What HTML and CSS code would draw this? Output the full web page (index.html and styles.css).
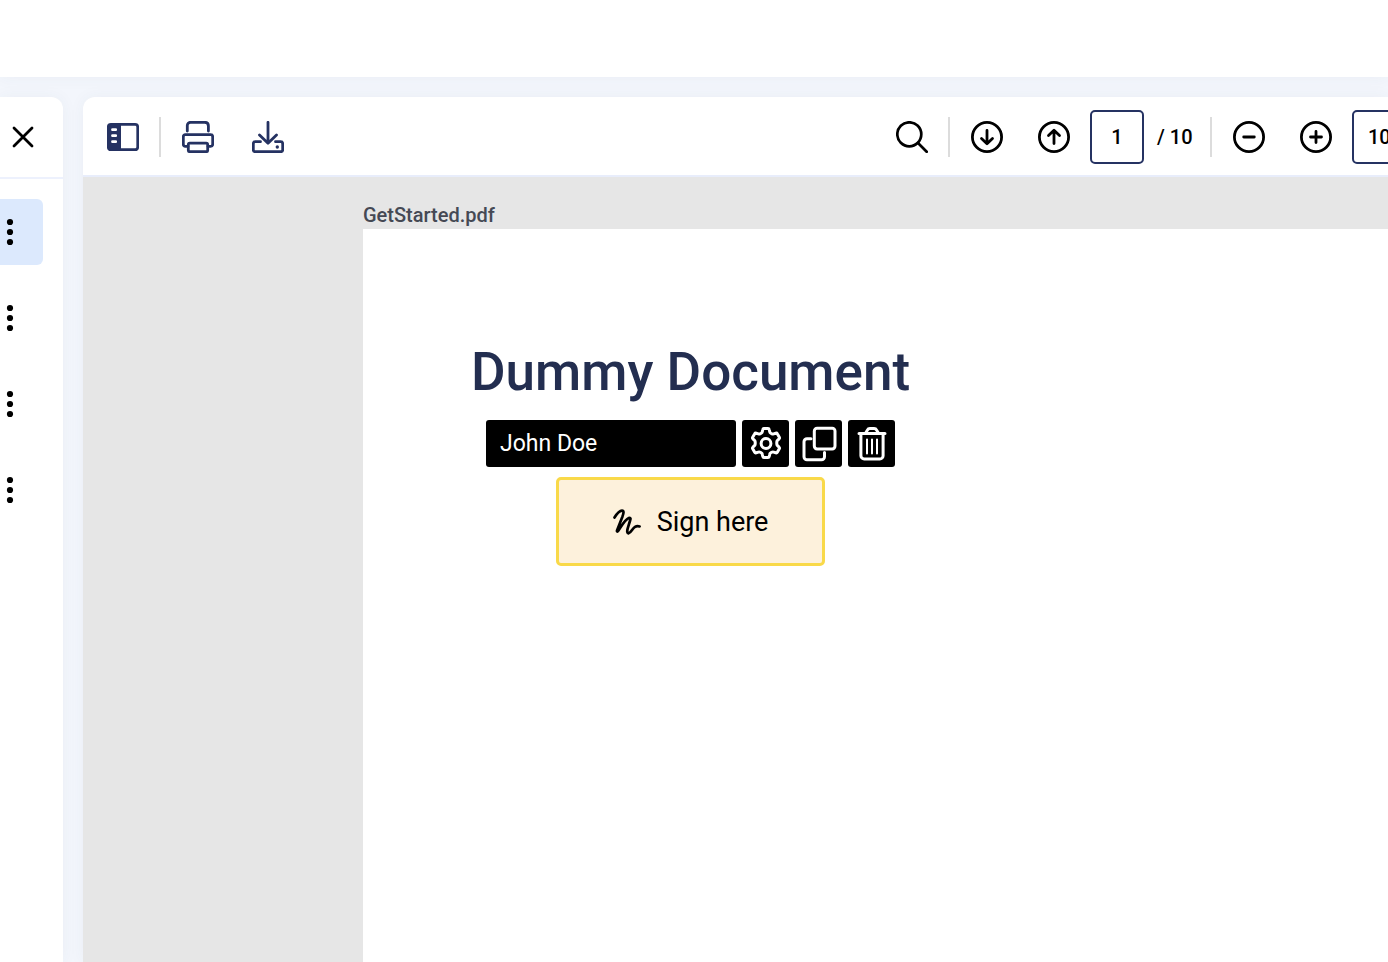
FILE: index.html
```html
<!DOCTYPE html>
<html lang="en">
<head>
    <meta charset="UTF-8">
    <meta name="viewport" content="width=device-width, initial-scale=1.0">
    <title>GetStarted.pdf</title>
    <link rel="stylesheet" href="styles.css">
</head>
<body>
    <header class="top-bar"></header>
    <div class="workspace">
        <aside class="side-panel">
            <div class="side-header">
                <button class="icon-btn" aria-label="Close">
                    <svg width="32" height="32" viewBox="0 0 32 32" stroke-width="2.8"><path d="M7 7l18 18M25 7L7 25"/></svg>
                </button>
            </div>
            <ul class="side-list">
                <li class="side-item active">
                    <button class="dots" aria-label="More"><svg width="8" height="28" viewBox="0 0 8 28"><circle cx="4" cy="4" r="3.1"/><circle cx="4" cy="14" r="3.1"/><circle cx="4" cy="24" r="3.1"/></svg></button>
                </li>
                <li class="side-item">
                    <button class="dots" aria-label="More"><svg width="8" height="28" viewBox="0 0 8 28"><circle cx="4" cy="4" r="3.1"/><circle cx="4" cy="14" r="3.1"/><circle cx="4" cy="24" r="3.1"/></svg></button>
                </li>
                <li class="side-item">
                    <button class="dots" aria-label="More"><svg width="8" height="28" viewBox="0 0 8 28"><circle cx="4" cy="4" r="3.1"/><circle cx="4" cy="14" r="3.1"/><circle cx="4" cy="24" r="3.1"/></svg></button>
                </li>
                <li class="side-item">
                    <button class="dots" aria-label="More"><svg width="8" height="28" viewBox="0 0 8 28"><circle cx="4" cy="4" r="3.1"/><circle cx="4" cy="14" r="3.1"/><circle cx="4" cy="24" r="3.1"/></svg></button>
                </li>
            </ul>
        </aside>

        <main class="viewer">
            <div class="toolbar">
                <div class="tools">
                    <button class="icon-btn navy" aria-label="Toggle thumbnails">
                        <svg width="32" height="32" viewBox="0 0 32 32" stroke-width="2.7">
                            <rect x="1.3" y="3.3" width="29.4" height="25.4" rx="2.6"/>
                            <path d="M1.5 5.5a2 2 0 0 1 2-2H14v25H3.5a2 2 0 0 1-2-2z" fill="currentColor" stroke="none"/>
                            <path d="M5.5 8.700h3.200M5.500 14.700h3.200M5.500 20.700h3.200" stroke="#fff" stroke-width="2.800"/>
                        </svg>
                    </button>
                    <span class="separator"></span>
                    <button class="icon-btn navy" aria-label="Print">
                        <svg width="32" height="32" viewBox="0 0 32 32" stroke-width="2.8" stroke-linecap="butt">
                            <path d="M5.3 10V4.500a3.200 3.200 0 0 1 3.200-3.200h14.200q3.700 0 3.700 3.700v5"/>
                            <path d="M6 25.300H3.300a2 2 0 0 1-2-2v-7.600a2 2 0 0 1 2-2h25.400a2 2 0 0 1 2 2v7.600a2 2 0 0 1-2 2H26"/>
                            <rect x="6.300" y="22.200" width="19.400" height="8.500" rx="1.500"/>
                        </svg>
                    </button>
                    <button class="icon-btn navy download" aria-label="Download">
                        <svg width="32" height="32" viewBox="0 0 32 32" stroke-width="2.8">
                            <path d="M16 1.300V22M7.500 14l8.500 8.300 8.500-8.300"/>
                            <path d="M8.500 20.700H3.300a2 2 0 0 0-2 2v6a2 2 0 0 0 2 2h25.400a2 2 0 0 0 2-2v-6a2 2 0 0 0-2-2h-5.200"/>
                            <circle cx="25.300" cy="26" r="1.700" fill="currentColor" stroke="none"/>
                        </svg>
                    </button>
                </div>
                <div class="tools tools-right">
                    <button class="icon-btn" aria-label="Search">
                        <svg width="32" height="32" viewBox="0 0 32 32" stroke-width="2.7"><circle cx="13.300" cy="13.300" r="12"/><path d="M22 22l8.700 8.700"/></svg>
                    </button>
                    <span class="separator"></span>
                    <button class="icon-btn" aria-label="Next page">
                        <svg width="32" height="32" viewBox="0 0 32 32" stroke-width="2.8"><circle cx="16" cy="16" r="14.600"/><path d="M16 9.500v13M10.500 17.500l5.500 5.300 5.500-5.300"/></svg>
                    </button>
                    <button class="icon-btn spaced" aria-label="Previous page">
                        <svg width="32" height="32" viewBox="0 0 32 32" stroke-width="2.8"><circle cx="16" cy="16" r="14.600"/><path d="M16 22.500v-13M10.500 14.500l5.500-5.300 5.500 5.300"/></svg>
                    </button>
                    <input class="page-input" type="text" value="1" aria-label="Page">
                    <span class="page-total">/ 10</span>
                    <span class="separator"></span>
                    <button class="icon-btn" aria-label="Zoom out">
                        <svg width="32" height="32" viewBox="0 0 32 32" stroke-width="2.8"><circle cx="16" cy="16" r="14.600"/><path d="M10.700 16h10.600"/></svg>
                    </button>
                    <button class="icon-btn spaced" aria-label="Zoom in">
                        <svg width="32" height="32" viewBox="0 0 32 32" stroke-width="2.8"><circle cx="16" cy="16" r="14.600"/><path d="M10.500 16h11M16 10.500v11"/></svg>
                    </button>
                    <input class="zoom-input" type="text" value="100%" aria-label="Zoom">
                </div>
            </div>

            <div class="canvas">
                <div class="file-name">GetStarted.pdf</div>
                <article class="page">
                    <div class="page-content">
                        <h1>Dummy Document</h1>
                        <div class="field-bar">
                            <input class="signer" type="text" value="John Doe" aria-label="Signer">
                            <button class="field-btn" aria-label="Settings">
                                <svg width="36" height="36" viewBox="0 0 36 36" stroke-width="3">
                                    <path d="M16 2.500h4q1 0 1.200 1l.5 2.200q.2 1 1.100 1.500l.9.500q.9.500 1.900.200l2.200-.700q1-.3 1.500.600l2 3.400q.5.900-.200 1.600l-1.600 1.500q-.7.700-.7 1.700v2q0 1 .7 1.700l1.600 1.500q.7.700.2 1.600l-2 3.400q-.5.900-1.500.6l-2.200-.7q-1-.3-1.900.2l-.9.500q-.9.500-1.100 1.500l-.5 2.200q-.2 1-1.200 1h-4q-1 0-1.200-1l-.5-2.200q-.2-1-1.100-1.500l-.9-.5q-.9-.5-1.900-.2l-2.200.7q-1 .3-1.500-.6l-2-3.400q-.5-.9.200-1.600l1.600-1.500q.7-.7.700-1.700v-2q0-1-.7-1.700l-1.600-1.500q-.7-.7-.2-1.600l2-3.400q.5-.9 1.500-.6l2.200.7q1 .3 1.900-.2l.9-.5q.9-.5 1.100-1.500l.5-2.200q.2-1 1.200-1z"/>
                                    <circle cx="18" cy="17.500" r="4.900"/>
                                </svg>
                            </button>
                            <button class="field-btn" aria-label="Duplicate">
                                <svg width="36" height="36" viewBox="0 0 36 36" stroke-width="3" stroke-linecap="butt">
                                    <rect x="13.300" y="2.200" width="20.700" height="20.700" rx="2.800"/>
                                    <path d="M10 12.800H6a3 3 0 0 0-3 3v14.900a3 3 0 0 0 3 3h14.500a3 3 0 0 0 3-3V26.500"/>
                                </svg>
                            </button>
                            <button class="field-btn" aria-label="Delete">
                                <svg width="36" height="36" viewBox="0 0 36 36" stroke-width="3">
                                    <path d="M5 7.500h26M11.500 7.200l1.800-3a3 3 0 0 1 2.600-1.600h4.200a3 3 0 0 1 2.600 1.600l1.800 3M6.900 7.700v22a3.300 3.300 0 0 0 3.300 3.300h15.600a3.300 3.300 0 0 0 3.300-3.300v-22"/>
                                    <path d="M13 13.500v14M18 13.500v14M23 13.500v14" stroke-width="2"/>
                                </svg>
                            </button>
                        </div>
                        <button class="sign-field">
                            <svg width="28" height="28" viewBox="0 0 28 28" stroke-width="2.7">
                                <path d="M1.500 9.500C4 5.500 6.500 2.700 9 2.600c2.300 0 1.500 3 .5 5.800L4 22.500c-.2 1.500.6 1.200 1.300.2C8.500 18 12 11.500 15.800 10c2-.6 1.900.8 1.300 2.500l-2.400 7.800c-.8 3-.6 5.200 1 5 2.300-.6 3.600-4.800 6.300-6.500 1.700-1 3.200-.9 4.600-.4"/>
                            </svg>
                            <span>Sign here</span>
                        </button>
                    </div>
                </article>
            </div>
        </main>
    </div>
</body>
</html>
```
FILE: styles.css
```css
* {
    box-sizing: border-box;
}

body {
    font-family: Roboto, "Liberation Sans", sans-serif;
    margin: 0;
    height: 100vh;
    display: flex;
    flex-direction: column;
    overflow: hidden;
    background-color: #f3f6fc;
    color: #000;
}

button,
input {
    font-family: inherit;
    color: inherit;
    margin: 0;
    padding: 0;
}

button {
    border: none;
    background: none;
    cursor: pointer;
}

svg {
    display: block;
    fill: none;
    stroke: currentColor;
    stroke-linecap: round;
    stroke-linejoin: round;
}

.top-bar {
    height: 77px;
    flex-shrink: 0;
    background-color: white;
    box-shadow: 0 0 16px rgba(50, 70, 100, 0.05);
}

.workspace {
    flex: 1;
    display: flex;
    gap: 20px;
    padding-top: 20px;
    min-height: 0;
}

.side-panel {
    width: 63px;
    flex-shrink: 0;
    background-color: white;
    border-radius: 0 12px 0 0;
    box-shadow: 0 0 16px rgba(50, 70, 100, 0.05);
}

.side-header {
    height: 82px;
    padding: 24px 24px 0 0;
    display: flex;
    justify-content: flex-end;
    align-items: flex-start;
    border-bottom: 2px solid #edf1fd;
}

.side-list {
    list-style: none;
    margin: 0;
    padding: 20px 20px 0 0;
    display: flex;
    flex-direction: column;
    gap: 20px;
}

.side-item {
    height: 66px;
    padding-left: 6px;
    display: flex;
    align-items: center;
    border-radius: 0 6px 6px 0;
}

.side-item.active {
    background-color: #dce9fd;
}

.dots svg {
    fill: currentColor;
    stroke: none;
}

.viewer {
    flex: 1;
    min-width: 0;
    display: flex;
    flex-direction: column;
    overflow: hidden;
    background-color: white;
    border-radius: 12px 0 0 0;
    box-shadow: 0 0 16px rgba(50, 70, 100, 0.05);
}

.toolbar {
    height: 80px;
    flex-shrink: 0;
    display: flex;
    justify-content: space-between;
    padding-left: 24px;
    border-bottom: 2px solid #e8edfb;
}

.tools {
    height: 80px;
    display: flex;
    align-items: center;
}

/* the zoom box runs past the right edge */
.tools-right {
    margin-right: -52px;
}

.icon-btn {
    flex-shrink: 0;
}

.navy {
    color: #253262;
}

.download {
    margin-left: 38px;
}

.spaced {
    margin-left: 35px;
}

.separator {
    width: 2px;
    height: 40px;
    margin: 0 21px 0 20px;
    background-color: #dcdcdc;
}

.page-input,
.zoom-input {
    height: 54px;
    border: 2px solid #253262;
    border-radius: 5px;
    background-color: white;
    font-size: 20px;
    font-weight: 500;
}

.page-input {
    width: 54px;
    margin-left: 20px;
    text-align: center;
}

.page-total {
    width: 46px;
    padding-left: 13px;
    font-size: 20px;
    font-weight: 500;
    white-space: nowrap;
}

.zoom-input {
    width: 88px;
    margin-left: 20px;
    padding-left: 14px;
}

.canvas {
    flex: 1;
    display: flex;
    flex-direction: column;
    padding: 24px 0 0 280px;
    background-color: #e6e6e6;
}

.file-name {
    font-size: 20px;
    line-height: 28px;
    font-weight: 500;
    color: #454954;
}

.page {
    flex: 1;
    padding: 111px 0 0 108px;
    background-color: white;
}

.page-content {
    display: inline-flex;
    flex-direction: column;
    align-items: center;
}

h1 {
    margin: 0 0 16px;
    font-size: 53px;
    line-height: 64px;
    font-weight: 500;
    color: #232e50;
}

.field-bar {
    display: flex;
    gap: 6px;
    margin-bottom: 10px;
}

.signer {
    width: 250px;
    height: 47px;
    padding: 0 14px;
    border: none;
    border-radius: 3px;
    background-color: #000;
    color: white;
    font-size: 23px;
}

.field-btn {
    width: 47px;
    height: 47px;
    display: flex;
    align-items: center;
    justify-content: center;
    border-radius: 3px;
    background-color: #000;
    color: white;
}

.sign-field {
    width: 269px;
    height: 89px;
    display: flex;
    align-items: center;
    justify-content: center;
    gap: 16px;
    border: 3px solid #f9d949;
    border-radius: 5px;
    background-color: #fdf1dc;
    font-size: 27px;
}
```
